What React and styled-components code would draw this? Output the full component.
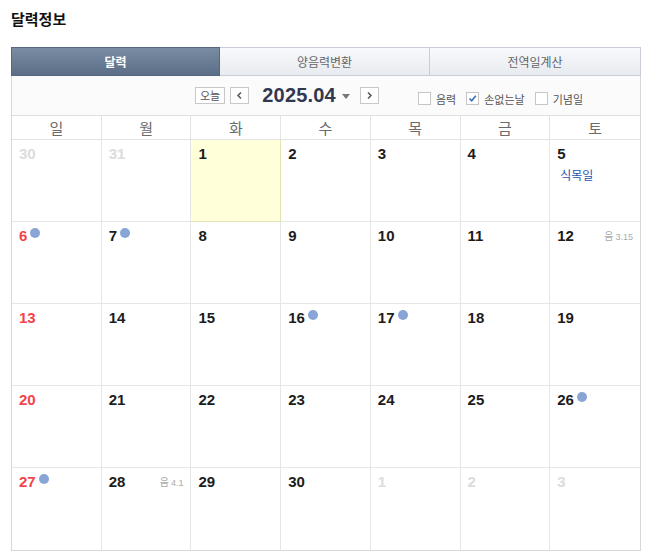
import React from "react"
import styled, { createGlobalStyle } from "styled-components"

const GlobalStyle = createGlobalStyle`
	body {
		margin: 0;
		background: #fff;
		font-family: "Noto Sans CJK KR", "Noto Sans", sans-serif;
	}
`

const numFont = `"Liberation Sans", "DejaVu Sans", sans-serif`

const weekdays = ["일", "월", "화", "수", "목", "금", "토"]

// one entry per cell: n = day, m = other month, sun = red, dot = 손없는날, lunar, holiday
const days = [
	{ n: 30, m: true }, { n: 31, m: true }, { n: 1, today: true }, { n: 2 }, { n: 3 }, { n: 4 }, { n: 5, holiday: "식목일" },
	{ n: 6, sun: true, dot: true }, { n: 7, dot: true }, { n: 8 }, { n: 9 }, { n: 10 }, { n: 11 }, { n: 12, lunar: "3.15" },
	{ n: 13, sun: true }, { n: 14 }, { n: 15 }, { n: 16, dot: true }, { n: 17, dot: true }, { n: 18 }, { n: 19 },
	{ n: 20, sun: true }, { n: 21 }, { n: 22 }, { n: 23 }, { n: 24 }, { n: 25 }, { n: 26, dot: true },
	{ n: 27, sun: true, dot: true }, { n: 28, lunar: "4.1" }, { n: 29 }, { n: 30 }, { n: 1, m: true }, { n: 2, m: true }, { n: 3, m: true },
]

const Page = styled.div`
	padding: 0 11px;
	width: 630px;
`

const Title = styled.h2`
	margin: 0;
	height: 47px;
	line-height: 37px;
	font-size: 15px;
	font-weight: 700;
	color: #111;
`

const Calendar = styled.div`
	border: 1px solid #d4d7dc;
	border-top: none;
`

const Tabs = styled.div`
	display: flex;
	margin: 0 -1px;
`

const Tab = styled.div`
	flex: ${p => (p.$w ? `0 0 ${p.$w}px` : "1")};
	box-sizing: border-box;
	height: 29px;
	line-height: 27px;
	text-align: center;
	font-size: 12px;
	border: 1px solid ${p => (p.$active ? "#56677f" : "#c9ced6")};
	border-left: ${p => (p.$first ? undefined : "none")};
	background: ${p => (p.$active
		? "linear-gradient(#7a8ca4, #5c6d86)"
		: "linear-gradient(#f8f9fb, #e8ebef)")};
	color: ${p => (p.$active ? "#fff" : "#666")};
	font-weight: ${p => (p.$active ? 700 : 400)};
`

const Toolbar = styled.div`
	display: flex;
	align-items: center;
	height: 39px;
	padding-left: 183px;
	background: #fbfbfb;
	border-bottom: 1px solid #dedede;
`

const SmallButton = styled.button`
	height: 17px;
	min-width: 19px;
	padding: 0 ${p => (p.$wide ? "4px" : "0")};
	margin-right: ${p => p.$mr || 0}px;
	border: 1px solid #c8c8c8;
	background: #fff;
	color: #555;
	font-family: "Noto Sans CJK KR", sans-serif;
	font-size: 11px;
	line-height: 15px;
	display: flex;
	align-items: center;
	justify-content: center;
	cursor: pointer;
`

const MonthTitle = styled.span`
	font-family: ${numFont};
	font-size: 20px;
	font-weight: 700;
	color: #323850;
	letter-spacing: 0.2px;
`

const Caret = styled.span`
	width: 0;
	height: 0;
	margin: 2px 10px 0 6px;
	border-left: 4px solid transparent;
	border-right: 4px solid transparent;
	border-top: 5px solid #777;
`

const Checks = styled.div`
	display: flex;
	align-items: center;
	margin-left: 39px;
	padding-top: 6px;
	gap: 8px;
`

const CheckLabel = styled.label`
	display: flex;
	align-items: center;
	gap: 5px;
	font-size: 11px;
	color: #555;
	margin-right: ${p => p.$mr || 0}px;
`

const Box = styled.span`
	width: 11px;
	height: 11px;
	border: 1px solid #c6c6c6;
	background: #fff;
	display: flex;
	align-items: center;
	justify-content: center;
`

const Grid = styled.div`
	display: grid;
	grid-template-columns: repeat(7, 1fr);
`

const HeadCell = styled.div`
	height: 23px;
	line-height: 23px;
	text-align: center;
	font-size: 15px;
	color: #6b6b6b;
	border-right: 1px solid #e3e3e3;
	border-bottom: 1px solid #e3e3e3;
	&:nth-child(7n) { border-right: none; }
`

const DayCell = styled.div`
	height: 82px;
	padding: 4px 7px 0 7px;
	box-sizing: border-box;
	border-right: 1px solid ${p => (p.$today ? "#e2e2b4" : "#e6e6e6")};
	border-bottom: 1px solid ${p => (p.$today ? "#e2e2b4" : "#e6e6e6")};
	background: ${p => (p.$today ? "#ffffda" : "#fff")};
	&:nth-child(7n) { border-right: none; }
	&:nth-last-child(-n + 7) { border-bottom: none; }
`

const DayTop = styled.div`
	display: flex;
	align-items: center;
	height: 18px;
`

const DayNum = styled.span`
	font-family: ${numFont};
	font-size: 15px;
	font-weight: 700;
	color: ${p => (p.$muted ? "#dcdcdc" : p.$sun ? "#f2444a" : "#1c1c1c")};
`

const Dot = styled.span`
	width: 10px;
	height: 10px;
	border-radius: 50%;
	background: #88a5d6;
	margin: -4px 0 0 3px;
`

const Lunar = styled.span`
	margin-left: auto;
	font-size: 10px;
	color: #aaa;
	span {
		font-family: ${numFont};
		font-size: 9px;
		margin-left: 2px;
	}
`

const Holiday = styled.div`
	margin: 4px 0 0 3px;
	font-size: 12px;
	color: #2a54b0;
`

function CheckIcon() {
	return (
		<svg width="9" height="9" viewBox="0 0 9 9">
			<path d="M1.5 4.5 L3.7 6.8 L7.8 1.8" fill="none" stroke="#3a6fb8" strokeWidth="1.6" />
		</svg>
	)
}

function Chevron({ dir }) {
	const d = dir === "left" ? "M5 1.5 L2 4.5 L5 7.5" : "M2 1.5 L5 4.5 L2 7.5"
	return (
		<svg width="7" height="9" viewBox="0 0 7 9">
			<path d={d} fill="none" stroke="#555" strokeWidth="1.5" />
		</svg>
	)
}

function Check({ label, checked, mr }) {
	return (
		<CheckLabel $mr={mr}>
			<Box>{checked && <CheckIcon />}</Box>
			{label}
		</CheckLabel>
	)
}

export default function App() {
	return (
		<Page>
			<GlobalStyle />
			<Title>달력정보</Title>
			<Calendar>
				<Tabs>
					<Tab $active $first $w={209}>달력</Tab>
					<Tab $w={210}>양음력변환</Tab>
					<Tab>전역일계산</Tab>
				</Tabs>
				<Toolbar>
					<SmallButton $wide $mr={5}>오늘</SmallButton>
					<SmallButton $mr={13}><Chevron dir="left" /></SmallButton>
					<MonthTitle>2025.04</MonthTitle>
					<Caret />
					<SmallButton><Chevron dir="right" /></SmallButton>
					<Checks>
						<Check label="음력" mr={2} />
						<Check label="손없는날" checked mr={2} />
						<Check label="기념일" />
					</Checks>
				</Toolbar>
				<Grid>
					{weekdays.map(w => <HeadCell key={w}>{w}</HeadCell>)}
					{days.map((d, i) => (
						<DayCell key={i} $today={d.today}>
							<DayTop>
								<DayNum $muted={d.m} $sun={d.sun}>{d.n}</DayNum>
								{d.dot && <Dot />}
								{d.lunar && <Lunar>음<span>{d.lunar}</span></Lunar>}
							</DayTop>
							{d.holiday && <Holiday>{d.holiday}</Holiday>}
						</DayCell>
					))}
				</Grid>
			</Calendar>
		</Page>
	)
}
